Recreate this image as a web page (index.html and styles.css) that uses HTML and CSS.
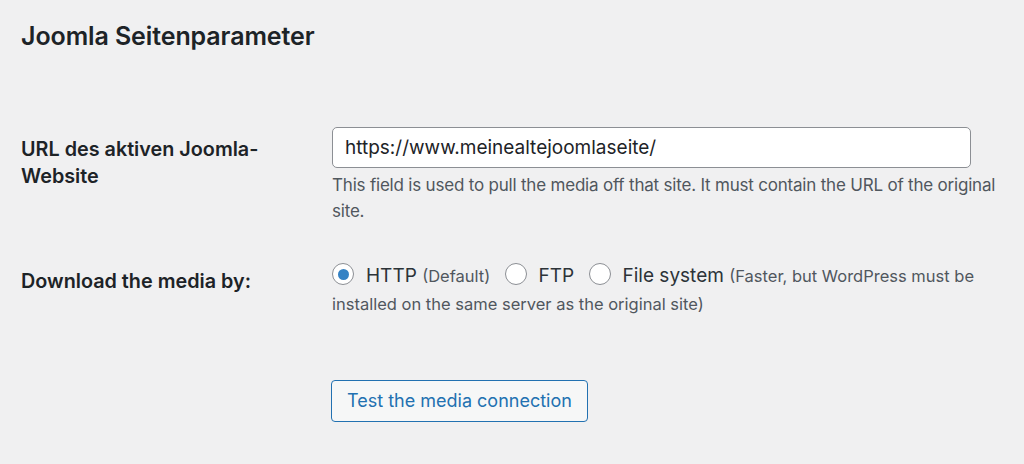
FILE: index.html
```html
<!DOCTYPE html>
<html lang="de">
<head>
<meta charset="utf-8">
<title>Joomla Seitenparameter</title>
<link rel="stylesheet" href="styles.css">
</head>
<body>
<div class="wrap">
  <h2 class="title">Joomla Seitenparameter</h2>
  <div class="form-table">
    <div class="row">
      <div class="th"><label for="url">URL des aktiven Joomla-Website</label></div>
      <div class="td">
        <input id="url" class="regular-text" type="text" value="https://www.meinealtejoomlaseite/">
        <p class="description">This field is used to pull the media off that site. It must contain the URL of the original site.</p>
      </div>
    </div>
    <div class="row row-radio">
      <div class="th"><span class="label">Download the media by:</span></div>
      <div class="td radios">
        <label class="opt"><input type="radio" name="method" checked><span class="opt-text">HTTP</span> <small>(Default)</small></label>
        <label class="opt"><input type="radio" name="method"><span class="opt-text">FTP</span></label>
        <label class="opt"><input type="radio" name="method"><span class="opt-text">File system</span> <small>(Faster, but WordPress must be</small> <small>installed on the same server as the original site)</small></label>
      </div>
    </div>
  </div>
  <div class="actions">
    <button class="button" type="button">Test the media connection</button>
  </div>
</div>
</body>
</html>
```
FILE: styles.css
```css
html, body {
  margin: 0;
  padding: 0;
  background: #f0f0f1;
}
body {
  font-family: Inter, "Noto Sans", "Liberation Sans", sans-serif;
  color: #1d2327;
}
.wrap {
  padding: 0 21px;
}
.title {
  margin: 0;
  padding-top: 20px;
  font-size: 25px;
  line-height: 32px;
  font-weight: 600;
  letter-spacing: -0.1px;
}
.form-table {
  margin-top: 75px;
}
.row {
  display: grid;
  grid-template-columns: 311px 668px;
}
.th {
  font-size: 19.8px;
  font-weight: 600;
  line-height: 27px;
  padding-top: 9px;
}
.th label, .th .label {
  display: block;
  width: 275px;
}
.td {
  font-size: 19px;
}
.regular-text {
  box-sizing: border-box;
  display: block;
  width: 639px;
  height: 41px;
  margin: 0;
  padding: 0 12px;
  border: 1.4px solid #8c8f94;
  border-radius: 5px;
  background: #fff;
  font: inherit;
  font-size: 19px;
  color: #1d2327;
}
.description {
  margin: 4px 0 0;
  font-size: 17px;
  letter-spacing: -0.2px;
  line-height: 26px;
  color: #50575e;
}
.row-radio {
  margin-top: 38px;
}
.row-radio .th {
  padding-top: 6px;
}
.radios {
  line-height: 27px;
  color: #2c3338;
}
.opt {
  margin-right: 9px;
}
.opt small {
  font-size: 16.5px;
  color: #50575e;
}
.opt-text {
  font-size: 19px;
}
.opt input {
  -webkit-appearance: none;
  appearance: none;
  box-sizing: border-box;
  width: 22px;
  height: 22px;
  margin: 0 12px 0 0;
  border: 1.4px solid #8c8f94;
  border-radius: 50%;
  background: #fff;
  vertical-align: -3px;
  position: relative;
}
.opt input:checked::before {
  content: "";
  position: absolute;
  left: 50%;
  top: 50%;
  width: 11px;
  height: 11px;
  margin: -5.5px 0 0 -5.5px;
  border-radius: 50%;
  background: #3582c4;
}
.actions {
  padding: 62px 0 0 310px;
}
.button {
  box-sizing: border-box;
  height: 42px;
  padding: 0 15px;
  border: 1.4px solid #2271b1;
  border-radius: 4px;
  background: #f6f7f7;
  color: #2271b1;
  font: inherit;
  font-size: 18px;
  line-height: 40px;
}
```
